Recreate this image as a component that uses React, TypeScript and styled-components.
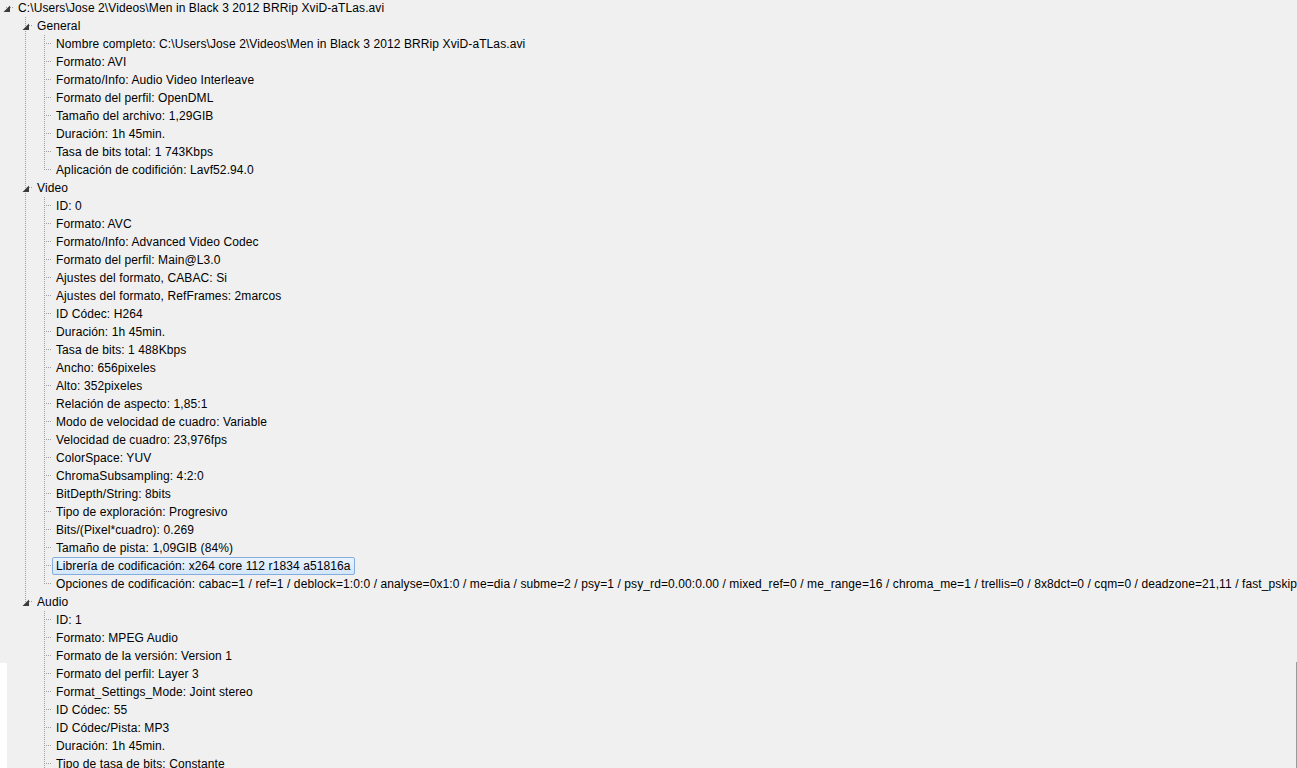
import React from "react";
import styled, { createGlobalStyle, css } from "styled-components";

type TreeNode = { label: string; selected?: boolean; children?: TreeNode[] };

const tree: TreeNode = {
  label: "C:\\Users\\Jose 2\\Videos\\Men in Black 3 2012 BRRip XviD-aTLas.avi",
  children: [
    {
      label: "General",
      children: [
        { label: "Nombre completo: C:\\Users\\Jose 2\\Videos\\Men in Black 3 2012 BRRip XviD-aTLas.avi" },
        { label: "Formato: AVI" },
        { label: "Formato/Info: Audio Video Interleave" },
        { label: "Formato del perfil: OpenDML" },
        { label: "Tamaño del archivo: 1,29GIB" },
        { label: "Duración: 1h 45min." },
        { label: "Tasa de bits total: 1 743Kbps" },
        { label: "Aplicación de codifición: Lavf52.94.0" },
      ],
    },
    {
      label: "Video",
      children: [
        { label: "ID: 0" },
        { label: "Formato: AVC" },
        { label: "Formato/Info: Advanced Video Codec" },
        { label: "Formato del perfil: Main@L3.0" },
        { label: "Ajustes del formato, CABAC: Si" },
        { label: "Ajustes del formato, RefFrames: 2marcos" },
        { label: "ID Códec: H264" },
        { label: "Duración: 1h 45min." },
        { label: "Tasa de bits: 1 488Kbps" },
        { label: "Ancho: 656pixeles" },
        { label: "Alto: 352pixeles" },
        { label: "Relación de aspecto: 1,85:1" },
        { label: "Modo de velocidad de cuadro: Variable" },
        { label: "Velocidad de cuadro: 23,976fps" },
        { label: "ColorSpace: YUV" },
        { label: "ChromaSubsampling: 4:2:0" },
        { label: "BitDepth/String: 8bits" },
        { label: "Tipo de exploración: Progresivo" },
        { label: "Bits/(Pixel*cuadro): 0.269" },
        { label: "Tamaño de pista: 1,09GIB (84%)" },
        { label: "Librería de codificación: x264 core 112 r1834 a51816a", selected: true },
        {
          label:
            "Opciones de codificación: cabac=1 / ref=1 / deblock=1:0:0 / analyse=0x1:0 / me=dia / subme=2 / psy=1 / psy_rd=0.00:0.00 / mixed_ref=0 / me_range=16 / chroma_me=1 / trellis=0 / 8x8dct=0 / cqm=0 / deadzone=21,11 / fast_pskip=1 / chroma_qp_offset=0 / threads=3 / sliced_threads=0 / nr=0",
        },
      ],
    },
    {
      label: "Audio",
      children: [
        { label: "ID: 1" },
        { label: "Formato: MPEG Audio" },
        { label: "Formato de la versión: Version 1" },
        { label: "Formato del perfil: Layer 3" },
        { label: "Format_Settings_Mode: Joint stereo" },
        { label: "ID Códec: 55" },
        { label: "ID Códec/Pista: MP3" },
        { label: "Duración: 1h 45min." },
        { label: "Tipo de tasa de bits: Constante" },
        { label: "Tasa de bits: 128Kbps" },
        { label: "Canal(es): 2canales" },
        { label: "Velocidad de muestreo: 48,0KHz" },
      ],
    },
  ],
};

const INDENT = 19;
const ROW = 18;
const DOT = "#a0a0a0";

const GlobalStyle = createGlobalStyle`
  html, body {
    margin: 0;
    padding: 0;
    background: #f0f0f0;
    overflow: hidden;
  }
  body {
    font-family: "Liberation Sans", Arial, sans-serif;
    font-size: 12px;
    letter-spacing: 0.1px;
    color: #000;
  }
`;

const Panel = styled.div`
  position: relative;
  width: 1297px;
  height: 768px;
  overflow: hidden;
  background: #f0f0f0;
`;

const TreeList = styled.ul<{ $root?: boolean }>`
  list-style: none;
  margin: 0;
  padding: 0;
  ${(p) =>
    p.$root &&
    css`
      margin-top: -1px;
    `}
`;

const Item = styled.li<{ $depth: number; $last: boolean }>`
  position: relative;
  ${(p) =>
    p.$depth > 0 &&
    css`
      &::before {
        content: "";
        position: absolute;
        left: ${6 + INDENT * p.$depth}px;
        top: 0;
        width: 1px;
        height: ${p.$last ? `${ROW / 2}px` : "100%"};
        background-image: linear-gradient(to bottom, ${DOT} 50%, transparent 50%);
        background-size: 1px 2px;
      }
    `}
`;

const Row = styled.div<{ $depth: number }>`
  position: relative;
  display: flex;
  align-items: center;
  height: ${ROW}px;
  padding-left: ${(p) => p.$depth * INDENT}px;
  white-space: nowrap;
  &::before {
    content: "";
    position: absolute;
    left: ${(p) => 6 + p.$depth * INDENT}px;
    top: ${ROW / 2 - 1}px;
    width: 8px;
    height: 1px;
    background-image: linear-gradient(to right, ${DOT} 50%, transparent 50%);
    background-size: 2px 1px;
  }
`;

const Expander = styled.span`
  position: relative;
  z-index: 1;
  flex: none;
  width: 12px;
  height: 12px;
  display: flex;
  align-items: center;
  justify-content: center;
`;

const Spacer = styled.span`
  flex: none;
  width: 12px;
`;

const Label = styled.span<{ $selected?: boolean }>`
  position: relative;
  z-index: 1;
  box-sizing: border-box;
  height: ${ROW}px;
  line-height: 16px;
  margin-left: 2px;
  padding: 0 3px;
  border: 1px solid transparent;
  border-radius: 2px;
  ${(p) =>
    p.$selected &&
    css`
      border-color: #84acdd;
      background: linear-gradient(to bottom, #eaf3fd, #d3e6fb);
    `}
`;

const WhiteEdge = styled.div`
  position: absolute;
  left: 0;
  top: 663px;
  width: 7px;
  height: 105px;
  background: #ffffff;
`;

const RightEdge = styled.div`
  position: absolute;
  left: 1296px;
  top: 662px;
  width: 1px;
  height: 106px;
  background: #9a9a9a;
`;

const Triangle = () => (
  <svg width="12" height="12" viewBox="0 0 12 12">
    <polygon points="10,3.5 10,10 3.5,10" fill="#3c3c3c" />
  </svg>
);

const NodeView: React.FC<{ node: TreeNode; depth: number; last: boolean }> = ({ node, depth, last }) => {
  const hasChildren = !!node.children && node.children.length > 0;
  return (
    <Item $depth={depth} $last={last}>
      <Row $depth={depth}>
        {hasChildren ? (
          <Expander>
            <Triangle />
          </Expander>
        ) : (
          <Spacer />
        )}
        <Label $selected={node.selected}>{node.label}</Label>
      </Row>
      {hasChildren && (
        <TreeList>
          {node.children!.map((c, i) => (
            <NodeView key={i} node={c} depth={depth + 1} last={i === node.children!.length - 1} />
          ))}
        </TreeList>
      )}
    </Item>
  );
};

export default function App() {
  return (
    <>
      <GlobalStyle />
      <Panel>
        <TreeList $root>
          <NodeView node={tree} depth={0} last />
        </TreeList>
        <WhiteEdge />
        <RightEdge />
      </Panel>
    </>
  );
}
